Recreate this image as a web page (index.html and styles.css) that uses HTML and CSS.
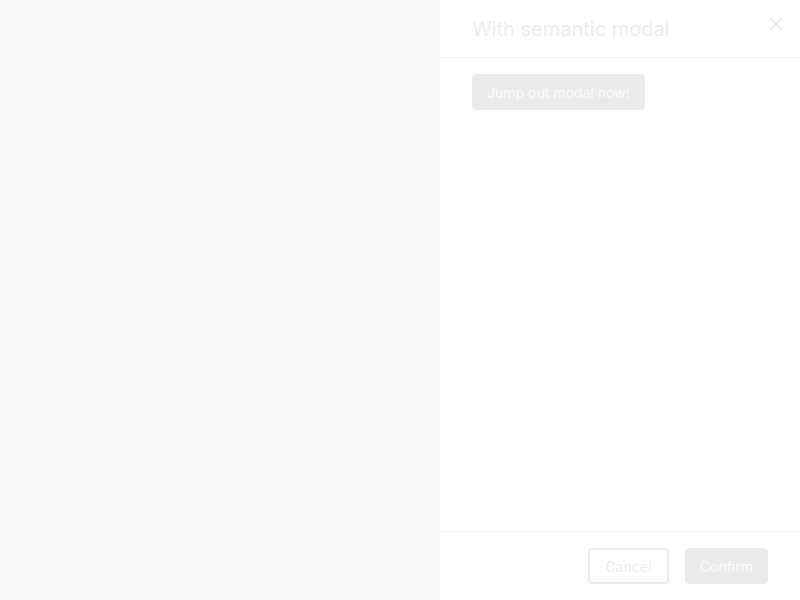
FILE: index.html
```html
<!DOCTYPE html>
<html>
<head>
<meta charset="utf-8">
<link rel="stylesheet" href="styles.css">
</head>
<body>
<div class="page">
  <div class="mask"></div>
  <aside class="drawer">
    <header class="drawer-header">
      <h2 class="drawer-title">With semantic modal</h2>
      <button class="close" aria-label="Close">
        <svg width="12" height="12" viewBox="0 0 12 12"><path d="M1 1L11 11M11 1L1 11" stroke="#e4e4e4" stroke-width="1.6" fill="none"/></svg>
      </button>
    </header>
    <div class="drawer-body">
      <button class="btn btn-fill">Jump out modal now!</button>
    </div>
    <footer class="drawer-footer">
      <button class="btn btn-outline">Cancel</button>
      <button class="btn btn-fill">Confirm</button>
    </footer>
  </aside>
</div>
</body>
</html>
```
FILE: styles.css
```css
* { box-sizing: border-box; }
html, body { margin: 0; height: 100%; }
body { font-family: Inter, "Noto Sans", sans-serif; }
.page { display: flex; height: 600px; width: 800px; }
.mask { flex: 1; background: #f7f7f7; }
.drawer { width: 360px; background: #fff; display: flex; flex-direction: column; }
.drawer-header {
  height: 58px; border-bottom: 1px solid #f5f5f5;
  display: flex; align-items: center; justify-content: space-between;
  padding: 0 18px 0 32px;
}
.drawer-title { margin: 0; font-size: 20px; font-weight: 400; color: #ececec; line-height: 28px; }
.close { background: none; border: 0; padding: 0; width: 12px; height: 12px; display: block; align-self: flex-start; margin-top: 18px; }
.close svg { display: block; }
.drawer-body { flex: 1; padding: 16px 32px; }
.drawer-footer {
  border-top: 1px solid #f5f5f5; height: 69px;
  display: flex; justify-content: flex-end; align-items: center; gap: 16px;
  padding: 0 32px;
}
.btn {
  font-family: Inter, sans-serif; font-size: 14px; height: 36px; padding: 0 15px;
  border-radius: 4px; cursor: pointer;
}
.btn-fill { background: #eaeaea; color: #fafafa; border: 0; }
.btn-outline { background: #fff; color: #ececec; border: 2px solid #ebebeb; padding: 0 15.5px; }
```
